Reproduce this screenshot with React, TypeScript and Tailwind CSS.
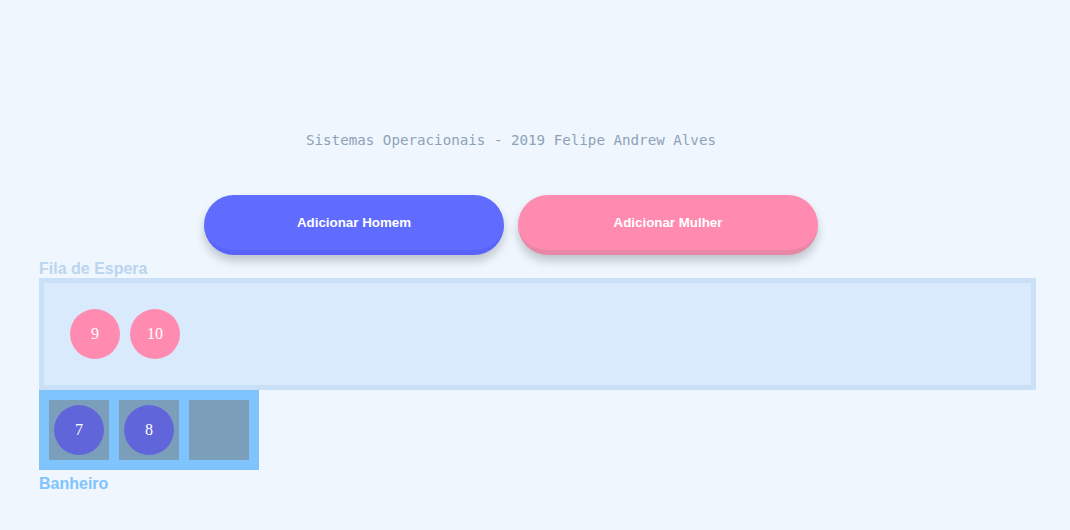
import React from "react";

const Circle = ({ n, color }: { n: number; color: string }) => (
  <div
    className={`w-[50px] h-[50px] rounded-full flex items-center justify-center text-white text-[16px] ${color}`}
    style={{ fontFamily: '"Liberation Serif", serif' }}
  >
    {n}
  </div>
);

export default function App() {
  return (
    <div className="w-[1070px] h-[530px] bg-[#eff6fe] overflow-hidden" style={{ fontFamily: '"Liberation Sans", Arial, sans-serif' }}>
      <div className="pt-[130px] w-[1022px] text-center text-[14.2px] leading-[20px] text-[#8ea2b8]" style={{ fontFamily: '"DejaVu Sans Mono", monospace' }}>
        Sistemas Operacionais - 2019 Felipe Andrew Alves
      </div>
      <div className="mt-[45px] flex gap-[14px] pl-[204px]">
        <button className="w-[300px] h-[60px] rounded-full bg-[#606cff] border-b-[5px] border-[#5963fb] text-white font-bold text-[13.33px] shadow-[0_6px_10px_rgba(0,0,0,0.2)]">
          Adicionar Homem
        </button>
        <button className="w-[300px] h-[60px] rounded-full bg-[#ff8cb0] border-b-[5px] border-[#e987a6] text-white font-bold text-[13.33px] shadow-[0_6px_10px_rgba(0,0,0,0.2)]">
          Adicionar Mulher
        </button>
      </div>
      <div className="pl-[39px]">
        <div className="mt-[5px] h-[18px] text-[16px] leading-[18px] font-bold text-[#b9d5f0]">Fila de Espera</div>
        <div className="w-[997px] h-[112px] border-[5px] border-[#cae0f6] bg-[#d9eafd] flex items-center gap-[10px] pl-[26px]">
          <Circle n={9} color="bg-[#ff8cb0]" />
          <Circle n={10} color="bg-[#ff8cb0]" />
        </div>
        <div className="w-[220px] h-[80px] bg-[#80c4fd] flex items-center gap-[10px] px-[10px]">
          <div className="w-[60px] h-[60px] bg-[#7b9fbb] flex items-center justify-center">
            <Circle n={7} color="bg-[#6066d9]" />
          </div>
          <div className="w-[60px] h-[60px] bg-[#7b9fbb] flex items-center justify-center">
            <Circle n={8} color="bg-[#6066d9]" />
          </div>
          <div className="w-[60px] h-[60px] bg-[#7b9fbb]" />
        </div>
        <div className="mt-[5px] text-[16px] leading-[18px] font-bold text-[#80c4fd]">Banheiro</div>
      </div>
    </div>
  );
}
